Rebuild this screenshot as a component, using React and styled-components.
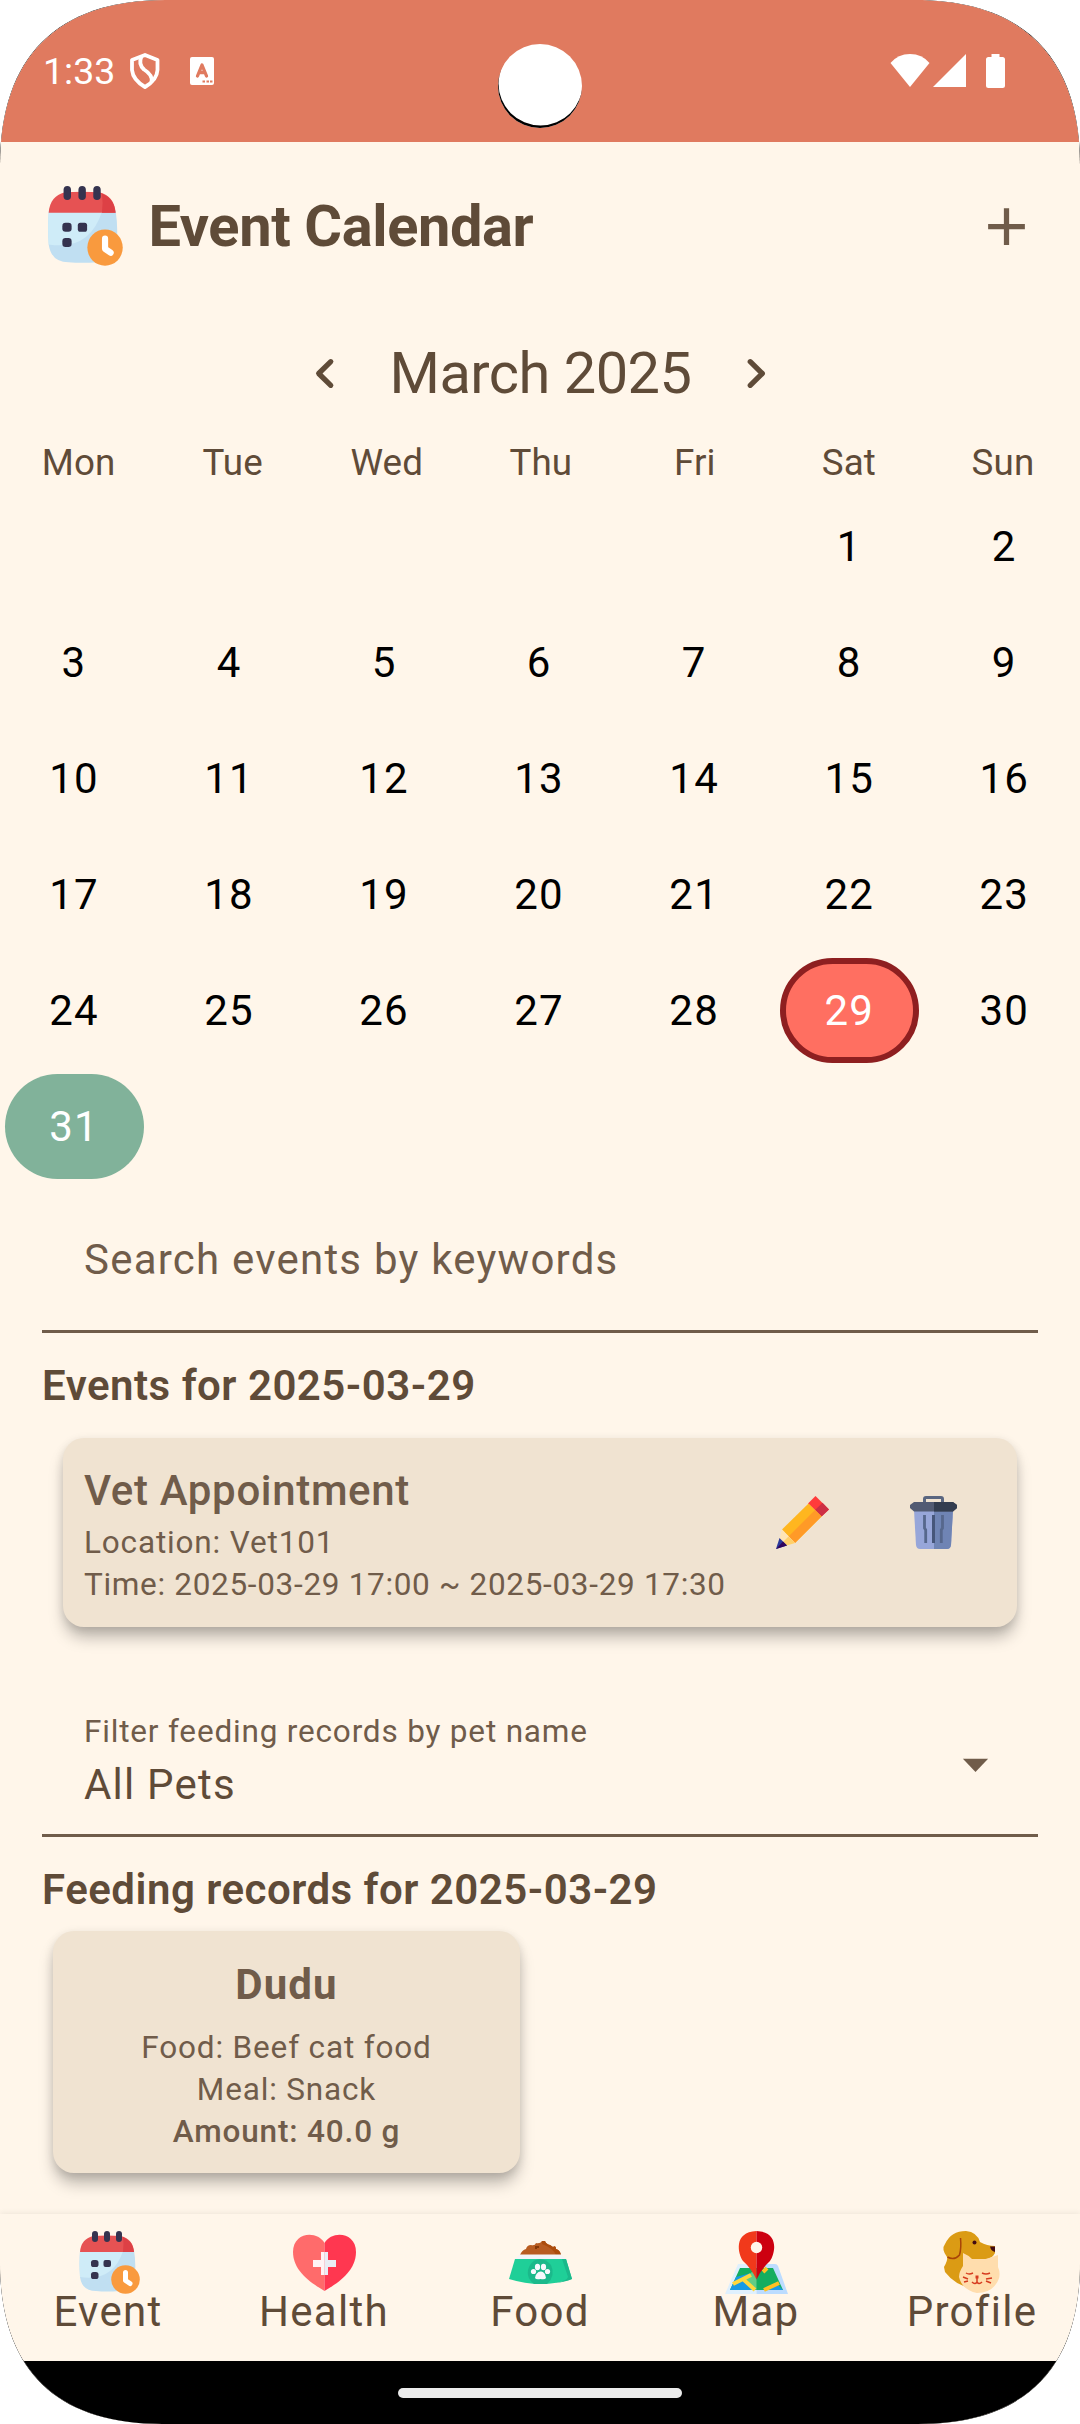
import React from "react";
import styled, { createGlobalStyle, css } from "styled-components";

const ink = "#5f4b38";
const soft = "#705c4a";
const cream = "#fff6ea";
const sand = "#f0e3d1";

const roundedPanel = (c) =>
  `path("M0 165C0 ${c} ${c} 0 165 0H915C${1080 - c} 0 1080 ${c} 1080 165V2262C1080 ${2424 - c + 2} ${1080 - c + 2} 2424 918 2424H162C${c - 2} 2424 0 ${2424 - c + 2} 0 2262Z")`;

const GlobalStyle = createGlobalStyle`
  * { box-sizing: border-box; }
  html, body { margin: 0; background: #fff; }
  body { font-family: Roboto, "Noto Sans", sans-serif; color: ${ink}; }
  h1, h2, h3, p { margin: 0; font-weight: inherit; font-size: inherit; }
  button { border: 0; padding: 0; background: none; color: inherit; font: inherit; letter-spacing: inherit; }
  svg { display: block; }
`;

const Device = styled.div`
  position: relative;
  width: 1080px;
  height: 2424px;
  background: #000;
  clip-path: ${roundedPanel(57)};
`;

const Screen = styled.div`
  display: flex;
  flex-direction: column;
  height: 100%;
  background: ${cream};
  clip-path: ${roundedPanel(57.6)};
`;

const StatusBar = styled.header`
  flex: none;
  display: flex;
  align-items: center;
  justify-content: space-between;
  height: 142px;
  padding: 0 74px 0 43px;
  background: #e07a5f;
  color: #fff;
`;

const StatusGroup = styled.div`
  display: flex;
  align-items: center;
  height: 142px;
`;

const Clock = styled.span`
  width: 87px;
  font-size: 37.5px;
  line-height: 43px;
`;

const Camera = styled.div`
  position: absolute;
  top: 44px;
  left: 498px;
  width: 84px;
  height: 84px;
  border-radius: 50%;
  background: #fff;
  box-shadow: inset 0.5px -2.5px 0 0 #000;
`;

const Main = styled.main`
  flex: 1;
  min-height: 0;
`;

const TitleBar = styled.div`
  display: flex;
  align-items: center;
  height: 168px;
  padding: 0 42px 0 44.5px;
`;

const Title = styled.h1`
  flex: 1;
  padding-left: 26px;
  font-size: 57.75px;
  font-weight: 700;
  line-height: 74px;
  letter-spacing: -0.38px;
`;

const MonthBar = styled.div`
  display: flex;
  align-items: center;
  justify-content: center;
  height: 126px;
  padding-left: 1px;
  gap: 32px;
`;

const MonthName = styled.h2`
  font-size: 57.75px;
  font-weight: 400;
  line-height: 74px;
  letter-spacing: -0.5px;
`;

const Weekdays = styled.div`
  display: grid;
  grid-template-columns: repeat(7, 1fr);
  height: 52.5px;
  padding: 1px 0 0 1.5px;
  font-size: 36.75px;
  line-height: 52px;
  letter-spacing: 0.1px;
  text-align: center;
`;

const Days = styled.div`
  display: grid;
  grid-template-columns: repeat(7, 1fr);
  grid-auto-rows: 116px;
  column-gap: 5.25px;
`;

const Day = styled.button`
  margin: 5.5px 5.75px 5.5px 5px;
  padding-right: 1px;
  border-radius: 53px;
  font-size: 42px;
  line-height: 63px;
  letter-spacing: 1.2px;
  color: #000;
  ${(p) => p.$today && css`background: #81b29a; color: #fff;`}
  ${(p) => p.$selected && css`
    background: #ff6f61;
    color: #fff;
    border: 6px solid #8e1f20;
  `}
`;

const Field = styled.div`
  display: flex;
  align-items: center;
  justify-content: space-between;
  height: 147px;
  margin: ${(p) => p.$top}px 42px 0;
  padding: 3px 42px 0;
  border-bottom: 3px solid ${soft};
  font-size: 42px;
  line-height: 63px;
  letter-spacing: 1.22px;
  color: ${(p) => (p.$filled ? ink : soft)};
`;

const FieldLabel = styled.div`
  font-size: 31.5px;
  line-height: 42px;
  letter-spacing: 0.82px;
  color: ${soft};
`;

const SectionTitle = styled.h2`
  margin: ${(p) => p.$top}px 42px 0;
  font-size: 42px;
  font-weight: 600;
  line-height: 63px;
  letter-spacing: 0.5px;
`;

const Card = styled.article`
  border-radius: 21px;
  background: ${sand};
  color: ${soft};
  box-shadow: 0 12px 16px -2px rgba(0, 0, 0, 0.27), 0 2px 10px rgba(0, 0, 0, 0.1);
`;

const EventCard = styled(Card)`
  display: flex;
  height: 189px;
  margin: 21px 63px 0;
  padding: 21px 60.5px 0 21px;
`;

const EventText = styled.div`
  flex: 1;
`;

const CardTitle = styled.h3`
  font-size: 42px;
  font-weight: ${(p) => (p.$bold ? 700 : 500)};
  line-height: 63px;
  letter-spacing: ${(p) => (p.$bold ? 1.1 : 0.65)}px;
`;

const CardLine = styled.p`
  font-size: 31.5px;
  font-weight: ${(p) => (p.$strong ? 500 : 400)};
  line-height: 42px;
  letter-spacing: ${(p) => (p.$tight ? 0.68 : 0.84)}px;
`;

const CardActions = styled.div`
  display: flex;
  align-items: flex-start;
  gap: 81px;
  padding-top: 37px;
`;

const FeedingCard = styled(Card)`
  width: 467px;
  height: 242px;
  margin: 10px 0 0 53px;
  padding-top: 22px;
  text-align: center;

  ${CardTitle} { margin-bottom: 11px; }
`;

const TabBar = styled.nav`
  flex: none;
  display: grid;
  grid-template-columns: repeat(5, 1fr);
  height: 147px;
  background: ${cream};
  box-shadow: 0 -1px 6px rgba(0, 0, 0, 0.07);
  position: relative;
`;

const Tab = styled.button`
  display: flex;
  flex-direction: column;
  align-items: center;
  padding-top: 17px;
  font-size: 42px;
  line-height: 36px;
  letter-spacing: 1.31px;
`;

const GestureBar = styled.footer`
  flex: none;
  display: flex;
  justify-content: center;
  height: 63px;
  padding-top: 27px;
  background: #000;

  &::after {
    content: "";
    width: 284px;
    height: 10px;
    border-radius: 5px;
    background: #ebebeb;
  }
`;

const CalendarIcon = ({ width, height }) => (
  <svg width={width} height={height} viewBox="0 0 63 63" preserveAspectRatio="none">
    <path d="M3 20Q2 32 3 46Q5 60 19 60Q30 61 42 60Q57 58 58 42Q59 32 57 19Z" fill="#c0dff2" />
    <path d="M3 20Q2 32 3 46Q36 51 46 20Z" fill="#cfecf8" />
    <path d="M3 21Q4 8 16 5Q30 4 44 5Q56 8 57 21Z" fill="#e65253" />
    <path d="M46 6Q56 10 57 21H46Q47 13 46 6Z" fill="#dd4045" />
    <g fill="#35334f">
      <rect x="15" y="0" width="6" height="11" rx="3" />
      <rect x="27" y="0" width="6" height="11" rx="3" />
      <rect x="39" y="0" width="6" height="11" rx="3" />
      <rect x="14" y="29" width="7.5" height="7" rx="2.6" />
      <rect x="26.5" y="29" width="7.5" height="7" rx="2" />
      <rect x="14" y="41" width="7.5" height="7" rx="2.6" />
    </g>
    <circle cx="48.5" cy="48.5" r="14.3" fill="#f99a3e" />
    <path d="M48.5 41.5V49.5L53 52.5" fill="none" stroke="#fff" strokeWidth="5" strokeLinecap="round" strokeLinejoin="round" />
  </svg>
);

const ShieldIcon = () => (
  <svg width="30" height="36" viewBox="0 0 30 36" fill="none" stroke="#fff" strokeWidth="3.8" strokeLinejoin="round">
    <path d="M15 2L27.500 7V17Q27 27 15 34Q3 27 2 17V7Z" />
    <path d="M11.500 3.500Q8 11 14 16.500Q23 22 21.500 29" />
  </svg>
);

const LetterBadgeIcon = () => (
  <svg width="24" height="28" viewBox="0 0 24 28" style={{ marginLeft: 30 }}>
    <rect width="24" height="28" rx="2" fill="#fff" />
    <path d="M7.5 19L12 8L16.500 19M9.500 15.500H14.500" fill="none" stroke="#e07a5f" strokeWidth="3.300" strokeLinejoin="round" strokeLinecap="round" />
    <path d="M12.500 24.500h2.500M16.500 24.500h2.500M20 24.500h2.500" stroke="#e07a5f" strokeWidth="2.200" />
  </svg>
);

const SystemIcons = () => (
  <svg width="116" height="34" viewBox="0 0 116 34" fill="#fff">
    <path d="M0.500 9Q8 0 20 0T39.500 9L20 33Z" />
    <path d="M43 33L76 0V33Z" />
    <path d="M101.500 0h8v3h3q2.500 0 2.500 2.500V31.500q0 2.500-2.500 2.500h-14q-2.500 0-2.500-2.500V5.500q0-2.500 2.500-2.500h3z" />
  </svg>
);

const PlusIcon = () => (
  <svg width="63" height="63" viewBox="0 0 24 24" fill={soft}>
    <path d="M19 13h-6v6h-2v-6H5v-2h6V5h2v6h6z" />
  </svg>
);

const Chevron = ({ next }) => (
  <svg width="63" height="63" viewBox="0 0 24 24" fill="none" stroke={ink} strokeWidth="2" strokeLinecap="round" strokeLinejoin="round">
    <path d={next ? "M10 7.500L14.600 12L10 16.500" : "M14 7.500L9.400 12L14 16.500"} />
  </svg>
);

const DropdownIcon = () => (
  <svg width="63" height="63" viewBox="0 0 24 24" fill={soft} style={{ marginRight: -10.5 }}>
    <path d="M7.200 10.200h9.600l-4.800 5z" />
  </svg>
);

const PencilIcon = () => (
  <svg width="53" height="53" viewBox="0 0 53 53">
    <path d="M39.500 0L53 13.500L45.500 20.500L32 7.500Z" fill="#ff3b3b" />
    <path d="M46.500 6.800L53 13.500L45.500 20.500L39 14Z" fill="#cd2f45" />
    <path d="M32.500 7.500L45.500 20.500L19 47L6 33.500Z" fill="#ffb61f" />
    <path d="M39 14L45.500 20.500L19 47L12.500 40.500Z" fill="#ff9a27" />
    <path d="M6 33.500L19 47L10.500 49.500L3.500 42.500Z" fill="#ffe5b4" />
    <path d="M12.500 40.500L19 47L10.500 49.500L7.500 45.500Z" fill="#ffd06a" />
    <path d="M3.500 42L11 49.500L0 53Z" fill="#2b3a9b" />
    <path d="M7 45.500L11 49.500L0 53Z" fill="#30045c" />
  </svg>
);

const TrashIcon = () => (
  <svg width="47" height="53" viewBox="0 0 47 53">
    <path d="M14.500 8V3Q14.500 1.500 16 1.500H31Q32.500 1.500 32.500 3V8" fill="none" stroke="#5a6680" strokeWidth="3" />
    <path d="M4 14H43L41 49Q40.500 53 37 53H10Q6.500 53 6 49Z" fill="#97a6d9" />
    <path d="M24 14H43L41 49Q40.500 53 37 53H24Z" fill="#6f84b4" />
    <path d="M4 6H43L47 9V12L43 15.500H4L0 12V9Z" fill="#525b73" />
    <path d="M24 6H43L47 9V12L43 15.500H24Z" fill="#333d4f" />
    <path d="M14.500 19V32L15.700 34V47M32.500 19V32L31.300 34V47" fill="none" stroke="#56678c" strokeWidth="2.800" />
    <path d="M23.500 19V47" stroke="#46567a" strokeWidth="3" />
  </svg>
);

const HeartIcon = () => (
  <svg width="63" height="63" viewBox="0 0 63 63">
    <path d="M31.500 12C24-1 0 1 0 21C0 40 18 52 31.500 60Z" fill="#ff6b6b" />
    <path d="M31.500 12C39-1 63 1 63 21C63 40 45 52 31.500 60Z" fill="#ff3750" />
    <path d="M28 21H31.500V44H28V36H20V29H28Z" fill="#fff3f5" />
    <path d="M31.500 21H35V29H43V36H35V44H31.500Z" fill="#e9edf5" />
  </svg>
);

const BowlIcon = () => (
  <svg width="63" height="63" viewBox="0 0 63 63">
    <path d="M11 24Q13 19 17 18Q18 14 22 14Q26 15 27 12Q31 13 33 10H36Q37 13 41 14L44 16Q47 14 47 18Q51 19 52 24Z" fill="#b85c21" />
    <path d="M33 10H36Q37 13 41 14L44 16Q47 14 47 18Q51 19 52 24H47Q44 17 33 13Z" fill="#ab4c0d" />
    <path d="M26 15h4v2h-2v1h-2z" fill="#843707" />
    <path d="M11 23.500H52L57 28.500H6Z" fill="#f4f4f8" />
    <path d="M6 28H57L63 48Q32 58 0 48Z" fill="#1fcf98" />
    <path d="M53 28H57L63 48Q56 51 46 52Q58 50 59 46Z" fill="#1bb98b" />
    <path d="M21 34Q25 28 31 28T42 34Q47 45 38 53H25Q15 45 21 34Z" fill="#1bb98b" />
    <g fill="#f7f9fd">
      <ellipse cx="28.500" cy="36" rx="2.600" ry="3.200" />
      <ellipse cx="34.500" cy="36" rx="2.600" ry="3.200" />
      <circle cx="24.500" cy="40.500" r="2.600" />
      <circle cx="38.500" cy="40.500" r="2.600" />
      <path d="M26 47Q27 41 31.500 40.500T37 47Q36 49 31.500 48Q27 49 26 47Z" />
    </g>
  </svg>
);

const MapIcon = () => (
  <svg width="63" height="63" viewBox="0 0 63 63">
    <path d="M13 33H31.500V63H0Z" fill="#dff0fd" />
    <path d="M31.500 33H50Q52 33 53 35L63 63H31.500Z" fill="#bcdcff" />
    <path d="M15 37H48L58 59H5Z" fill="#14ad60" />
    <path d="M20 47L31.500 37V59Z" fill="#62cc86" />
    <path d="M11 46L26 42L21 49L31 59H5Z" fill="#189ae4" />
    <path d="M52 53L58 59H44Z" fill="#189ae4" />
    <path d="M8 53L26 44M18 48L30 59" stroke="#ffd83d" strokeWidth="4" />
    <path d="M39 59L54 52M38 41L42 37" stroke="#ffc022" strokeWidth="4" />
    <path d="M31.500 0C8 1 13 23 18 30Q26 37 31.500 48.500Z" fill="#f1391b" />
    <path d="M31.500 0C55 1 50 23 45 30Q37 37 31.500 48.500Z" fill="#cd0010" />
    <circle cx="31.500" cy="16.500" r="5.700" fill={cream} />
  </svg>
);

const PetsIcon = () => (
  <svg width="63" height="63" viewBox="0 0 63 63">
    <path d="M4 13Q10 0 25 0Q36 1 39 11Q46 15 54 15V22Q51 28 44 28L30 36V57Q14 54 4 41L3 36Q7 29 6 26Q0 18 4 13Z" fill="#db9b14" />
    <path d="M19.500 7Q20.500 17 18.500 24Q13 30 6.500 26" fill="none" stroke="#a84408" strokeWidth="1.500" />
    <circle cx="33.500" cy="11.500" r="2" fill="#430b12" />
    <path d="M49 15.500H54V21Q50 20 49 15.500Z" fill="#430b12" />
    <path d="M22 22Q27 24 31 28H45L57 24V36Q61 45 55 53Q49 62 36 62Q21 59 18 46Q18 41 22 35Z" fill="#ffddad" />
    <g fill="none" stroke="#d63b1f" strokeWidth="1.500">
      <path d="M25 42Q28 44 32 42M41 42Q45 44 49 42M22 46L27 48M23 51L27 50M45 48L51 47M45 50L50 52M31 51Q34 54 36 51Q38 54 41 51M36 46V51" />
      <path d="M34.500 46h3" strokeWidth="3" />
    </g>
  </svg>
);

const weekdays = ["Mon", "Tue", "Wed", "Thu", "Fri", "Sat", "Sun"];
const days = Array.from({ length: 31 }, (_, i) => i + 1);

const tabs = [
  { label: "Event", icon: <CalendarIcon width={63} height={63} /> },
  { label: "Health", icon: <HeartIcon /> },
  { label: "Food", icon: <BowlIcon /> },
  { label: "Map", icon: <MapIcon /> },
  { label: "Profile", icon: <PetsIcon /> },
];

export default function App() {
  return (
    <>
      <GlobalStyle />
      <Device>
        <Screen>
          <StatusBar>
            <StatusGroup>
              <Clock>1:33</Clock>
              <ShieldIcon />
              <LetterBadgeIcon />
            </StatusGroup>
            <SystemIcons />
          </StatusBar>
          <Main>
            <TitleBar>
              <CalendarIcon width={78} height={80} />
              <Title>Event Calendar</Title>
              <PlusIcon />
            </TitleBar>
            <MonthBar>
              <Chevron />
              <MonthName>March 2025</MonthName>
              <Chevron next />
            </MonthBar>
            <Weekdays>
              {weekdays.map((name) => <span key={name}>{name}</span>)}
            </Weekdays>
            <Days>
              {["a", "b", "c", "d", "e"].map((key) => <span key={key} />)}
              {days.map((day) => (
                <Day key={day} $selected={day === 29} $today={day === 31}>{day}</Day>
              ))}
            </Days>
            <Field $top={1.5}>Search events by keywords</Field>
            <SectionTitle $top={21}>Events for 2025-03-29</SectionTitle>
            <EventCard>
              <EventText>
                <CardTitle>Vet Appointment</CardTitle>
                <CardLine>Location: Vet101</CardLine>
                <CardLine $tight>Time: 2025-03-29 17:00 ~ 2025-03-29 17:30</CardLine>
              </EventText>
              <CardActions>
                <PencilIcon />
                <TrashIcon />
              </CardActions>
            </EventCard>
            <Field $top={63} $filled>
              <div>
                <FieldLabel>Filter feeding records by pet name</FieldLabel>
                All Pets
              </div>
              <DropdownIcon />
            </Field>
            <SectionTitle $top={21}>Feeding records for 2025-03-29</SectionTitle>
            <FeedingCard>
              <CardTitle $bold>Dudu</CardTitle>
              <CardLine>Food: Beef cat food</CardLine>
              <CardLine>Meal: Snack</CardLine>
              <CardLine $strong>Amount: 40.0 g</CardLine>
            </FeedingCard>
          </Main>
          <TabBar>
            {tabs.map((tab) => (
              <Tab key={tab.label}>
                {tab.icon}
                {tab.label}
              </Tab>
            ))}
          </TabBar>
          <GestureBar />
        </Screen>
        <Camera />
      </Device>
    </>
  );
}
